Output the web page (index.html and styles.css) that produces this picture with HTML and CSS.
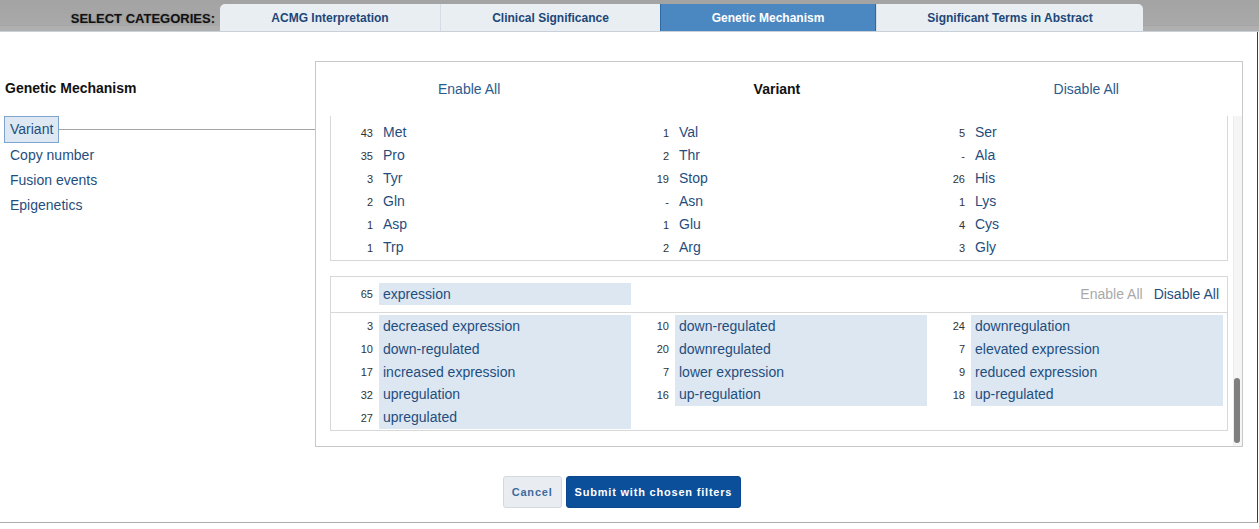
FILE: index.html
```html
<!DOCTYPE html>
<html lang="en">
<head>
  <meta charset="UTF-8">
  <meta name="viewport" content="width=device-width, initial-scale=1.0">
  <title>Filters</title>
  <link rel="stylesheet" href="styles.css">
</head>
<body>
  <div class="topbar">
    <div class="topbar-label">SELECT CATEGORIES:</div>
    <nav class="tabs">
      <a class="tab">ACMG Interpretation</a>
      <a class="tab">Clinical Significance</a>
      <a class="tab active">Genetic Mechanism</a>
      <a class="tab">Significant Terms in Abstract</a>
    </nav>
  </div>

  <div class="modal">
    <div class="filters">
      <aside class="sidebar">
        <h3>Genetic Mechanism</h3>
        <ul class="group-list">
          <li class="group active"><span class="group-name">Variant</span><span class="connector"></span></li>
          <li class="group"><span class="group-name">Copy number</span></li>
          <li class="group"><span class="group-name">Fusion events</span></li>
          <li class="group"><span class="group-name">Epigenetics</span></li>
        </ul>
      </aside>

      <section class="panel">
        <div class="panel-head">
          <a>Enable All</a>
          <strong>Variant</strong>
          <a>Disable All</a>
        </div>
        <div class="panel-body">
          <div class="scroll-content">

            <div class="term-box cut">
              <div class="term-grid">
                <ul class="term-col">
                  <li class="term"><span class="count">43</span><span class="name">Met</span></li>
                  <li class="term"><span class="count">35</span><span class="name">Pro</span></li>
                  <li class="term"><span class="count">3</span><span class="name">Tyr</span></li>
                  <li class="term"><span class="count">2</span><span class="name">Gln</span></li>
                  <li class="term"><span class="count">1</span><span class="name">Asp</span></li>
                  <li class="term"><span class="count">1</span><span class="name">Trp</span></li>
                </ul>
                <ul class="term-col">
                  <li class="term"><span class="count">1</span><span class="name">Val</span></li>
                  <li class="term"><span class="count">2</span><span class="name">Thr</span></li>
                  <li class="term"><span class="count">19</span><span class="name">Stop</span></li>
                  <li class="term"><span class="count">-</span><span class="name">Asn</span></li>
                  <li class="term"><span class="count">1</span><span class="name">Glu</span></li>
                  <li class="term"><span class="count">2</span><span class="name">Arg</span></li>
                </ul>
                <ul class="term-col">
                  <li class="term"><span class="count">5</span><span class="name">Ser</span></li>
                  <li class="term"><span class="count">-</span><span class="name">Ala</span></li>
                  <li class="term"><span class="count">26</span><span class="name">His</span></li>
                  <li class="term"><span class="count">1</span><span class="name">Lys</span></li>
                  <li class="term"><span class="count">4</span><span class="name">Cys</span></li>
                  <li class="term"><span class="count">3</span><span class="name">Gly</span></li>
                </ul>
              </div>
            </div>

            <div class="term-box">
              <div class="term-head">
                <div class="term hl"><span class="count">65</span><span class="name">expression</span></div>
                <div class="toggles"><span class="off">Enable All</span><a>Disable All</a></div>
              </div>
              <div class="term-grid hl">
                <ul class="term-col">
                  <li class="term"><span class="count">3</span><span class="name">decreased expression</span></li>
                  <li class="term"><span class="count">10</span><span class="name">down-regulated</span></li>
                  <li class="term"><span class="count">17</span><span class="name">increased expression</span></li>
                  <li class="term"><span class="count">32</span><span class="name">upregulation</span></li>
                  <li class="term"><span class="count">27</span><span class="name">upregulated</span></li>
                </ul>
                <ul class="term-col">
                  <li class="term"><span class="count">10</span><span class="name">down-regulated</span></li>
                  <li class="term"><span class="count">20</span><span class="name">downregulated</span></li>
                  <li class="term"><span class="count">7</span><span class="name">lower expression</span></li>
                  <li class="term"><span class="count">16</span><span class="name">up-regulation</span></li>
                </ul>
                <ul class="term-col">
                  <li class="term"><span class="count">24</span><span class="name">downregulation</span></li>
                  <li class="term"><span class="count">7</span><span class="name">elevated expression</span></li>
                  <li class="term"><span class="count">9</span><span class="name">reduced expression</span></li>
                  <li class="term"><span class="count">18</span><span class="name">up-regulated</span></li>
                </ul>
              </div>
            </div>

          </div>
          <div class="scrollbar"><div class="thumb"></div></div>
        </div>
      </section>
    </div>

    <div class="actions">
      <button class="btn btn-cancel">Cancel</button>
      <button class="btn btn-submit">Submit with chosen filters</button>
    </div>
  </div>
</body>
</html>
```

FILE: styles.css
```css
* {
  box-sizing: border-box;
}
body {
  margin: 0;
  width: 1259px;
  height: 529px;
  overflow: hidden;
  font-family: "Liberation Sans", Arial, sans-serif;
  background: #fff;
}
a {
  cursor: pointer;
}

/* category bar */
.topbar {
  display: flex;
  height: 32px;
  background: linear-gradient(#a3a3a3 0, #a9a9a9 25px, #9d9d9d 25px, #afafaf 26px, #b0b0b0 100%);
  border-bottom: 1px solid #c9d0d7;
}
.topbar-label {
  width: 215px;
  margin-right: 5px;
  padding-top: 5px;
  line-height: 27px;
  text-align: right;
  font-size: 13px;
  font-weight: bold;
  color: #111;
  text-shadow: 0 0 2px rgba(0, 0, 0, 0.25);
}
.tabs {
  display: grid;
  grid-template-columns: 220px 220px 216px 267px;
  margin-top: 4px;
}
.tab {
  height: 27px;
  padding-top: 1px;
  line-height: 26px;
  text-align: center;
  font-size: 12px;
  font-weight: bold;
  color: #1d4777;
  background: #e9eef3;
  border-left: 1px solid #d4dde6;
}
.tab:first-child {
  border-left: none;
  border-top-left-radius: 5px;
}
.tab:last-child {
  border-top-right-radius: 5px;
}
.tab.active {
  background: #4b87c1;
  color: #fff;
  border-left: 1px solid #2f69a5;
  border-right: 1px solid #2f69a5;
}

/* modal */
.modal {
  width: 1258px;
  height: 491px;
  padding-top: 29px;
  border-right: 1px solid #3b3b3b;
  border-bottom: 1px solid #acacac;
}
.filters {
  display: flex;
}

.sidebar {
  width: 315px;
  padding-left: 4px;
}
.sidebar h3 {
  margin: 19px 0 19px 1px;
  font-size: 14px;
  line-height: 17px;
  color: #111;
}
.group-list {
  list-style: none;
  margin: 0;
  padding: 0;
}
.group {
  display: flex;
  align-items: center;
  font-size: 14px;
  color: #1f4e7e;
}
.group-name {
  padding: 3px 5px;
  line-height: 17px;
  border: 1px solid transparent;
}
.group.active .group-name {
  padding: 4px 5px;
  background: #dde8f3;
  border-color: #7ca4cf;
}
.connector {
  flex: 1;
  height: 1px;
  background: #a3a3a3;
}

/* right panel */
.panel {
  width: 928px;
  height: 386px;
  display: flex;
  flex-direction: column;
  border: 1px solid #c8c8c8;
}
.panel-head {
  height: 54px;
  display: flex;
  justify-content: space-between;
  align-items: center;
  padding: 0 123px 0 122px;
  font-size: 14px;
}
.panel-head a {
  color: #2b5b8d;
}
.panel-head strong {
  color: #111;
}
.panel-body {
  flex: 1;
  min-height: 0;
  display: flex;
}
.scroll-content {
  flex: 1;
  overflow: hidden;
  padding: 0 5px 0 14px;
}
.scrollbar {
  width: 9px;
  display: flex;
  flex-direction: column;
  justify-content: flex-end;
  padding: 0 1px 3px 0;
  background: #f5f5f5;
  border-left: 1px solid #ededed;
}
.thumb {
  width: 6px;
  height: 65px;
  border-radius: 3px;
  background: #7f7f7f;
}

/* term boxes */
.term-box {
  border: 1px solid #d8d8d8;
}
.term-box + .term-box {
  margin-top: 15px;
}
.term-box.cut {
  border-top: none;
}
.term-grid {
  display: grid;
  grid-template-columns: repeat(3, 1fr);
  padding: 2px 8px 1px 4px;
}
.term-box.cut .term-grid {
  padding: 5px 8px 1px 4px;
}
.term-col {
  list-style: none;
  margin: 0;
  padding: 0;
}
.term {
  display: flex;
  align-items: center;
  height: 23px;
}
.term-grid.hl .term {
  height: 22.8px;
}
.count {
  width: 38px;
  text-align: right;
  font-size: 11px;
  color: #333;
}
.name {
  width: 252px;
  height: 100%;
  margin-left: 6px;
  padding-left: 4px;
  line-height: 23px;
  font-size: 14px;
  color: #1f4e7e;
}
.hl .name {
  background: #dce7f2;
}
.term-head {
  display: flex;
  align-items: center;
  padding: 6px 8px 7px 4px;
  border-bottom: 1px solid #d8d8d8;
}
.term-head .term {
  height: 22px;
}
.term-head .name {
  line-height: 22px;
}
.toggles {
  margin-left: auto;
  display: flex;
  gap: 11px;
  font-size: 14px;
}
.toggles .off {
  color: #a9a9a9;
}
.toggles a {
  color: #1f4e7e;
}

/* buttons */
.actions {
  display: flex;
  justify-content: center;
  gap: 4px;
  margin-top: 29px;
  padding-right: 13px;
}
.btn {
  height: 32px;
  padding: 0 8px;
  font-family: inherit;
  font-size: 11px;
  font-weight: bold;
  letter-spacing: 0.8px;
  border: 1px solid;
  border-radius: 3px;
}
.btn-cancel {
  background: #e9edf1;
  border-color: #d3d9df;
  color: #3d6b9e;
}
.btn-submit {
  background: #0b4f9b;
  border-color: #0a4790;
  color: #fff;
}
```
